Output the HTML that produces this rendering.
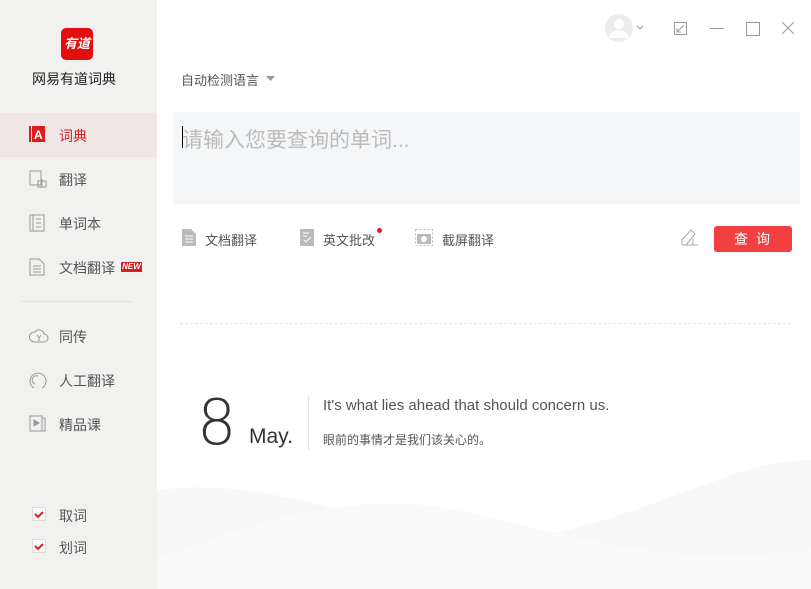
<!DOCTYPE html>
<html><head><meta charset="utf-8"><style>
*{margin:0;padding:0;box-sizing:border-box}
body{width:811px;height:589px;overflow:hidden;background:#fff;font-family:"Liberation Sans","Noto Sans CJK SC",sans-serif;position:relative}
.sb{position:absolute;left:0;top:0;width:157px;height:589px;background:#f1f1f0}
.abs{position:absolute}
.nav{position:absolute;left:0;width:157px;height:44px;font-size:14px;color:#555}
.nav span{position:absolute;left:59px;top:13px}
.nav svg{position:absolute;left:29px;top:13px}
.t{font-size:13px;color:#555}
.cb{position:absolute;width:14px;height:14px;border:1px solid #ddd;background:#f8f8f8}
</style></head><body>
<div class="sb">
 <div class="abs" style="left:61px;top:28px;width:32px;height:32px;background:#e1100f;border-radius:5px;color:#fff;font-size:13px;font-weight:bold;text-align:center;line-height:32px;font-style:italic">有道</div>
 <div class="abs" style="left:32px;top:69px;font-size:14px;color:#222">网易有道词典</div>
 <div class="nav" style="top:113px;background:#f0e6e5"><svg width="16" height="16"><rect x="0" y="0" width="2" height="16" fill="#d81e1e"/><rect x="3" y="0" width="13" height="16" fill="#d81e1e"/><text x="5" y="13" font-size="12" font-weight="bold" fill="#fff" font-family="Liberation Sans">A</text></svg><span style="color:#d81e1e">词典</span></div>
 <div class="nav" style="top:157px"><svg width="18" height="18" fill="none" stroke="#999"><rect x="1" y="1" width="11" height="14"/><path d="M9 11h8v6h-8zM13 9v9"/></svg><span>翻译</span></div>
 <div class="nav" style="top:201px"><svg width="16" height="18" fill="none" stroke="#999"><rect x="1" y="1" width="14" height="16"/><path d="M4 1v16M7 5h5M7 9h5M7 13h5"/></svg><span>单词本</span></div>
 <div class="nav" style="top:245px"><svg width="16" height="18" fill="none" stroke="#999"><path d="M1 1h9l5 5v11H1z M4 8h8M4 11h8M4 14h8"/></svg><span>文档翻译</span><div class="abs" style="left:121px;top:17px;width:21px;height:10px;background:#d81e1e;color:#fff;font-size:8px;font-weight:bold;line-height:10px;text-align:center;font-style:italic">NEW</div></div>
 <div class="abs" style="left:21px;top:301px;width:111px;height:1px;background:#e2e2e2"></div>
 <div class="nav" style="top:314px"><svg width="20" height="18" fill="none" stroke="#999"><path d="M5 15h10a4 4 0 0 0 0-8 5 5 0 0 0-9-2 4 4 0 0 0-1 10z M8 8l2 3 2-3M10 11v3"/></svg><span>同传</span></div>
 <div class="nav" style="top:358px"><svg width="18" height="20" fill="none" stroke="#999"><path d="M5 17A8 8 0 1 1 13 17M9 5a4 4 0 0 0-3 8"/></svg><span>人工翻译</span></div>
 <div class="nav" style="top:402px"><svg width="18" height="18" fill="none" stroke="#999"><rect x="1" y="1" width="12" height="15"/><path d="M13 3h3v13h-3"/><path d="M5 5l5 3-5 3z" fill="#999"/></svg><span>精品课</span></div>
 <div class="cb" style="left:32px;top:507px"><svg width="12" height="12" class="abs" style="left:0;top:0"><path d="M2 6l3 3 5-5" stroke="#e01e1e" stroke-width="2" fill="none"/></svg></div>
 <div class="abs t" style="left:59px;top:506px;font-size:14px">取词</div>
 <div class="cb" style="left:32px;top:539px"><svg width="12" height="12" class="abs" style="left:0;top:0"><path d="M2 6l3 3 5-5" stroke="#e01e1e" stroke-width="2" fill="none"/></svg></div>
 <div class="abs t" style="left:59px;top:538px;font-size:14px">划词</div>
</div>
<svg class="abs" style="left:600px;top:12px" width="200" height="34" fill="none" stroke="#999">
 <circle cx="19" cy="16" r="14" fill="#ececec" stroke="none"/>
 <circle cx="19" cy="12" r="5" fill="#fff" stroke="none"/>
 <path d="M9 26a10 8 0 0 1 20 0z" fill="#fff" stroke="none"/>
 <path d="M37 14l3 3 3-3"/>
 <rect x="74.5" y="10.5" width="12" height="12"/><path d="M77 20l7-7M77 16v4h4"/>
 <path d="M110 16.5h14"/>
 <rect x="146.5" y="10.5" width="13" height="13"/>
 <path d="M182 10l12 12M194 10l-12 12"/>
</svg>
<div class="abs t" style="left:181px;top:70px">自动检测语言</div>
<svg class="abs" style="left:266px;top:76px" width="9" height="5"><path d="M0 0h9L4.5 5z" fill="#999"/></svg>
<div class="abs" style="left:173px;top:112px;width:627px;height:92px;background:#f4f6f8"></div>
<div class="abs" style="left:182px;top:126px;width:1px;height:22px;background:#000"></div>
<div class="abs" style="left:182px;top:124px;font-size:21px;color:#bbb">请输入您要查询的单词...</div>
<svg class="abs" style="left:182px;top:229px" width="14" height="17"><path d="M0 0h9l5 5v12H0z" fill="#bbb"/><path d="M3 7h8M3 10h8M3 13h8" stroke="#fff"/></svg>
<div class="abs t" style="left:205px;top:230px">文档翻译</div>
<svg class="abs" style="left:300px;top:229px" width="14" height="17"><rect width="14" height="17" fill="#bbb"/><path d="M3 4h6M3 7h4M4 11l2 2 5-5" stroke="#fff" fill="none"/></svg>
<div class="abs t" style="left:323px;top:230px">英文批改</div>
<div class="abs" style="left:377px;top:228px;width:5px;height:5px;border-radius:50%;background:#e01e1e"></div>
<svg class="abs" style="left:415px;top:229px" width="18" height="17"><rect x="0.5" y="0.5" width="17" height="16" fill="none" stroke="#bbb" stroke-dasharray="2 2"/><rect x="2" y="5" width="14" height="10" fill="#bbb"/><circle cx="9" cy="10" r="3" fill="#fff"/></svg>
<div class="abs t" style="left:442px;top:230px">截屏翻译</div>
<svg class="abs" style="left:681px;top:228px" width="18" height="18" fill="none" stroke="#aaa"><path d="M1 17h16M1 17V12l9-10 4 4-9 11M12 11v6"/></svg>
<div class="abs" style="left:714px;top:226px;width:78px;height:26px;background:#f24040;border-radius:3px;color:#fff;font-size:14px;text-align:center;line-height:26px;letter-spacing:8px;padding-left:6px">查询</div>
<div class="abs" style="left:180px;top:323px;width:611px;border-top:1px dashed #e6e6e6"></div>
<div class="abs" style="left:197px;top:388px;font-size:62px;font-weight:200;color:#333;font-family:'DejaVu Sans ExtraLight','DejaVu Sans','Liberation Sans',sans-serif;line-height:70px">8</div>
<div class="abs" style="left:249px;top:425px;font-size:21px;color:#333">May.</div>
<div class="abs" style="left:308px;top:396px;width:1px;height:54px;background:#ddd"></div>
<div class="abs" style="left:323px;top:397px;font-size:15px;color:#555">It's what lies ahead that should concern us.</div>
<div class="abs" style="left:323px;top:431px;font-size:12px;color:#555">眼前的事情才是我们该关心的。</div>
<svg class="abs" style="left:157px;top:440px" width="654" height="149"><path d="M0 50C80 40 150 60 250 90 360 120 450 80 560 40 600 25 630 20 654 20V149H0z" fill="#f8f8f8"/><path d="M0 120C100 80 200 50 300 70 400 90 500 130 654 110V149H0z" fill="#fafafa"/></svg>
</body></html>
